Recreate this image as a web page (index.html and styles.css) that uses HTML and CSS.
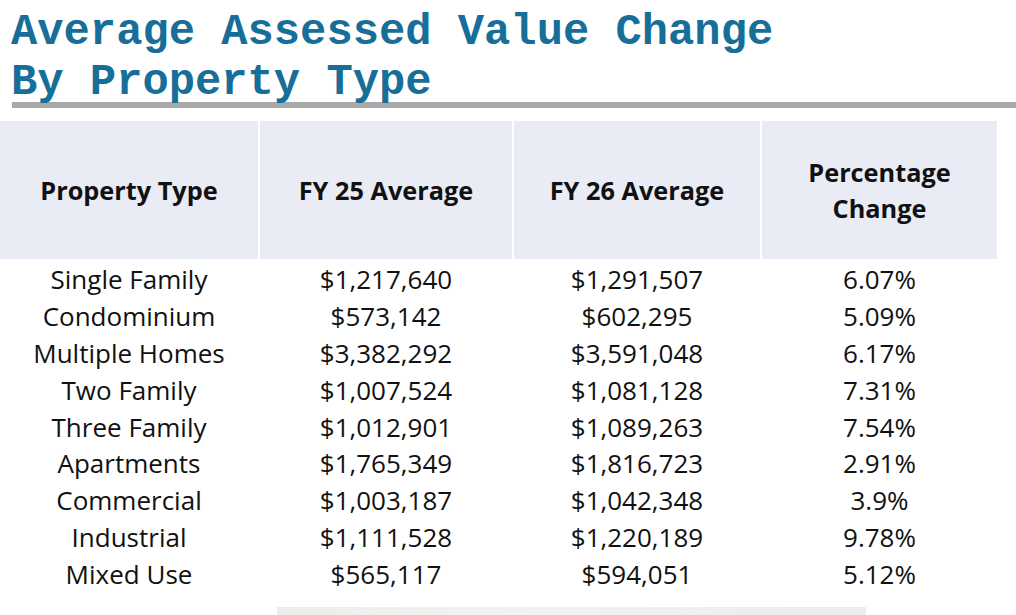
FILE: index.html
```html
<!DOCTYPE html>
<html>
<head>
<meta charset="utf-8">
<link rel="stylesheet" href="styles.css">
</head>
<body>
<div class="page">
  <h1 class="title">Average Assessed Value Change<br>By Property Type</h1>
  <div class="rule"></div>
  <div class="table">
    <div class="head">
      <div class="hcell">Property Type</div>
      <div class="hcell">FY 25 Average</div>
      <div class="hcell">FY 26 Average</div>
      <div class="hcell">Percentage<br>Change</div>
    </div>
    <div class="body">
      <div class="row"><span>Single Family</span><span>$1,217,640</span><span>$1,291,507</span><span>6.07%</span></div>
      <div class="row"><span>Condominium</span><span>$573,142</span><span>$602,295</span><span>5.09%</span></div>
      <div class="row"><span>Multiple Homes</span><span>$3,382,292</span><span>$3,591,048</span><span>6.17%</span></div>
      <div class="row"><span>Two Family</span><span>$1,007,524</span><span>$1,081,128</span><span>7.31%</span></div>
      <div class="row"><span>Three Family</span><span>$1,012,901</span><span>$1,089,263</span><span>7.54%</span></div>
      <div class="row"><span>Apartments</span><span>$1,765,349</span><span>$1,816,723</span><span>2.91%</span></div>
      <div class="row"><span>Commercial</span><span>$1,003,187</span><span>$1,042,348</span><span>3.9%</span></div>
      <div class="row"><span>Industrial</span><span>$1,111,528</span><span>$1,220,189</span><span>9.78%</span></div>
      <div class="row"><span>Mixed Use</span><span>$565,117</span><span>$594,051</span><span>5.12%</span></div>
    </div>
  </div>
  <div class="footer-box"></div>
</div>
</body>
</html>
```
FILE: styles.css
```css
html, body {
  margin: 0;
  padding: 0;
  background: #ffffff;
}
.page {
  width: 1016px;
  height: 615px;
  overflow: hidden;
  position: relative;
}
.title {
  margin: 8px 0 0 11px;
  font-family: "Liberation Mono", "Courier New", monospace;
  font-weight: bold;
  font-size: 43.8px;
  line-height: 50px;
  color: #176f99;
  letter-spacing: 0;
}
.rule {
  margin: -6px 0 0 12px;
  height: 6px;
  background: #a8a8a8;
}
.table {
  margin-top: 13px;
  font-family: "Open Sans", Lato, sans-serif;
  color: #111;
}
.head, .row {
  display: grid;
  grid-template-columns: 258px 252px 246px 235px;
  column-gap: 2px;
  width: 997px;
}
.hcell {
  background: #e9ebf5;
  height: 138px;
  display: flex;
  align-items: center;
  justify-content: center;
  text-align: center;
  font-weight: bold;
  font-size: 25.3px;
  line-height: 36px;
}
.body {
  padding-top: 2px;
}
.row {
  height: 36.8px;
  align-items: center;
  font-size: 26px;
}
.row span {
  text-align: center;
}
.footer-box {
  margin: 15px 0 0 277px;
  width: 589px;
  height: 20px;
  background: linear-gradient(90deg, #eceeea 0%, #f2f3f0 40%, #ecedea 100%);
}
```
